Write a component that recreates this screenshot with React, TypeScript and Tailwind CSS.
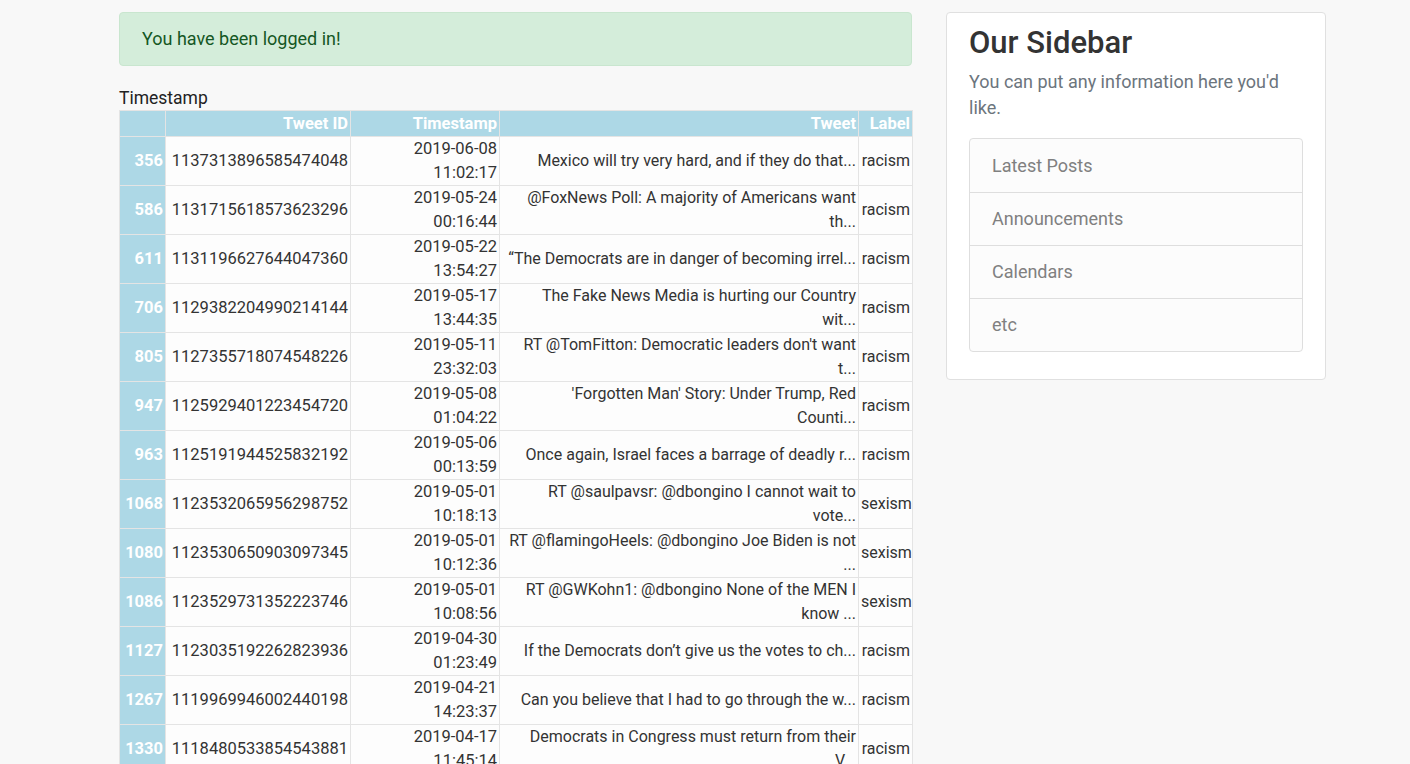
import React from "react";

type Row = {
  idx: number;
  id: string;
  date: string;
  time: string;
  tweet: string[];
  label: string;
};

const rows: Row[] = [
  { idx: 356, id: "1137313896585474048", date: "2019-06-08", time: "11:02:17", tweet: ["Mexico will try very hard, and if they do that..."], label: "racism" },
  { idx: 586, id: "1131715618573623296", date: "2019-05-24", time: "00:16:44", tweet: ["@FoxNews Poll: A majority of Americans want", "th..."], label: "racism" },
  { idx: 611, id: "1131196627644047360", date: "2019-05-22", time: "13:54:27", tweet: ["“The Democrats are in danger of becoming irrel..."], label: "racism" },
  { idx: 706, id: "1129382204990214144", date: "2019-05-17", time: "13:44:35", tweet: ["The Fake News Media is hurting our Country", "wit..."], label: "racism" },
  { idx: 805, id: "1127355718074548226", date: "2019-05-11", time: "23:32:03", tweet: ["RT @TomFitton: Democratic leaders don't want", "t..."], label: "racism" },
  { idx: 947, id: "1125929401223454720", date: "2019-05-08", time: "01:04:22", tweet: ["'Forgotten Man' Story: Under Trump, Red", "Counti..."], label: "racism" },
  { idx: 963, id: "1125191944525832192", date: "2019-05-06", time: "00:13:59", tweet: ["Once again, Israel faces a barrage of deadly r..."], label: "racism" },
  { idx: 1068, id: "1123532065956298752", date: "2019-05-01", time: "10:18:13", tweet: ["RT @saulpavsr: @dbongino I cannot wait to", "vote..."], label: "sexism" },
  { idx: 1080, id: "1123530650903097345", date: "2019-05-01", time: "10:12:36", tweet: ["RT @flamingoHeels: @dbongino Joe Biden is not", "..."], label: "sexism" },
  { idx: 1086, id: "1123529731352223746", date: "2019-05-01", time: "10:08:56", tweet: ["RT @GWKohn1: @dbongino None of the MEN I", "know ..."], label: "sexism" },
  { idx: 1127, id: "1123035192262823936", date: "2019-04-30", time: "01:23:49", tweet: ["If the Democrats don’t give us the votes to ch..."], label: "racism" },
  { idx: 1267, id: "1119969946002440198", date: "2019-04-21", time: "14:23:37", tweet: ["Can you believe that I had to go through the w..."], label: "racism" },
  { idx: 1330, id: "1118480533854543881", date: "2019-04-17", time: "11:45:14", tweet: ["Democrats in Congress must return from their", "V..."], label: "racism" },
];

const links = ["Latest Posts", "Announcements", "Calendars", "etc"];

const cell = "border border-[#e4e4e4] bg-[#fdfdfd] px-[2px] text-right align-middle";

export default function App() {
  return (
    <div
      className="min-h-screen bg-[#f8f8f8] text-[16px] leading-[24px] text-[#333]"
      style={{ fontFamily: "Roboto, 'Liberation Sans', sans-serif" }}
    >
      <div className="flex items-start gap-[34px] pl-[119px] pt-[12px]">
        <main className="w-[793px]">
          <div className="flex h-[54px] items-center rounded-[4px] border border-[#c9e6cf] bg-[#d4edda] px-[22px] text-[18px] text-[#155724]">
            You have been logged in!
          </div>

          <div className="mt-[20px] text-[17.5px] leading-[24px] text-[#222]">Timestamp</div>

          <table className="w-[793px] table-fixed border-collapse">
            <colgroup>
              <col className="w-[46px]" />
              <col className="w-[185px]" />
              <col className="w-[149px]" />
              <col className="w-[359px]" />
              <col className="w-[54px]" />
            </colgroup>
            <thead>
              <tr className="h-[26px] bg-[#add8e6] text-[16.5px] text-white">
                <th className="border border-[#e4e4e4] px-[2px]"></th>
                <th className="border border-[#e4e4e4] px-[2px] text-right font-bold">Tweet ID</th>
                <th className="border border-[#e4e4e4] px-[2px] text-right font-bold">Timestamp</th>
                <th className="border border-[#e4e4e4] px-[2px] text-right font-bold">Tweet</th>
                <th className="border border-[#e4e4e4] px-[2px] text-right font-bold">Label</th>
              </tr>
            </thead>
            <tbody>
              {rows.map((r) => (
                <tr key={r.idx} className="h-[49px]">
                  <th className="border border-[#e4e4e4] bg-[#add8e6] px-[2px] text-right text-[16.5px] font-bold text-white">
                    {r.idx}
                  </th>
                  <td className={`${cell} text-[16.5px]`}>{r.id}</td>
                  <td className={`${cell} text-[16.5px]`}>
                    <div>{r.date}</div>
                    <div>{r.time}</div>
                  </td>
                  <td className={cell}>
                    {r.tweet.map((t, i) => (
                      <div key={i} className="whitespace-nowrap">
                        {t}
                      </div>
                    ))}
                  </td>
                  <td className={cell}>{r.label}</td>
                </tr>
              ))}
            </tbody>
          </table>
        </main>

        <aside className="w-[380px] rounded-[4px] border border-[#e0e0e0] bg-white px-[22px] pb-[27px] pt-[12px]">
          <h3 className="text-[31px] font-medium leading-[36px] text-[#333]">Our Sidebar</h3>
          <p className="mt-[8px] text-[18px] leading-[26px] text-[#6c757d]">
            You can put any information here you'd like.
          </p>
          <ul className="mt-[17px] overflow-hidden rounded-[4px] border border-[#dedede] bg-[#fcfcfc]">
            {links.map((l, i) => (
              <li
                key={l}
                className={`flex h-[53px] items-center px-[22px] text-[18px] text-[#808080] ${
                  i > 0 ? "border-t border-[#dedede]" : ""
                }`}
              >
                {l}
              </li>
            ))}
          </ul>
        </aside>
      </div>
    </div>
  );
}
